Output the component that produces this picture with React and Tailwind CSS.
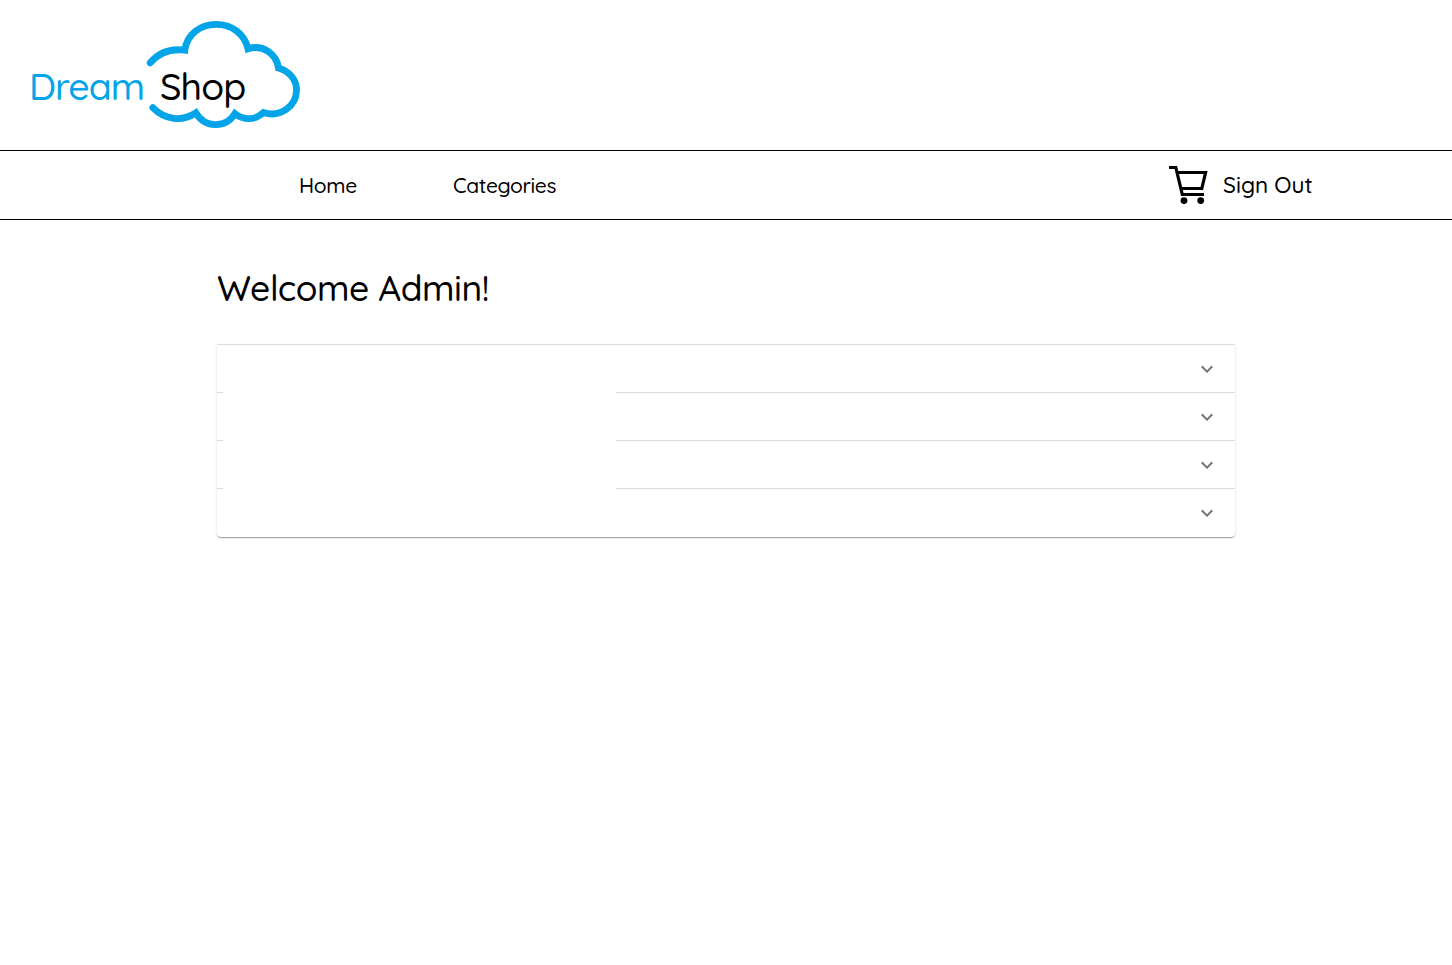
function CloudLogo() {
  return (
    <svg width="300" height="130" viewBox="0 0 300 130" fill="none" stroke="#03a4e8" strokeWidth="6.8" strokeLinecap="round" strokeLinejoin="miter" aria-hidden="true">
      <path d="M150.2 62.8 C159 52.5 171 48.3 184.8 50.2 C187 34.5 200 24.4 216 24.4 C232 24.4 244.5 34 248 48.8 C263 44 276.5 54 278.5 68 C289 71 296.5 79.5 296.5 90 C296.5 106 280.5 118 263.5 112.6 C255 120.5 243.5 120.5 235 113.6 C226 128.5 205 128.5 195.8 112.8 C182 122 165 120 152.8 107.6" />
    </svg>
  );
}

function CartIcon() {
  return (
    <svg width="40" height="40" viewBox="0 0 40 40" fill="none" stroke="#000" strokeWidth="3.2" aria-hidden="true">
      <path d="M1 2.5H7.8L14.3 29.5H36" />
      <path d="M9 7.5H37.6L33.8 23.5H13" />
      <circle cx="16" cy="35.6" r="3.4" fill="#000" stroke="none" />
      <circle cx="32.7" cy="35.6" r="3.4" fill="#000" stroke="none" />
    </svg>
  );
}

function Panel({ masked, last }) {
  return (
    <div className="flex h-12 items-stretch">
      <div className={last ? "w-1.5" : "w-1.5 border-b border-[#dcdcdc]"} />
      <div className={last || masked ? "w-[393px]" : "w-[393px] border-b border-[#dcdcdc]"} />
      <div className={last ? "flex flex-1 items-center justify-end pr-4" : "flex flex-1 items-center justify-end border-b border-[#dcdcdc] pr-4"}>
        <svg width="24" height="24" viewBox="0 0 24 24" fill="#757575" aria-hidden="true">
          <path d="M16.59 8.59 12 13.17 7.41 8.59 6 10l6 6 6-6z" />
        </svg>
      </div>
    </div>
  );
}

export default function App() {
  return (
    <div className="min-h-[965px] bg-white font-['Quicksand','Lato',sans-serif] font-medium text-black">
      <header className="relative h-[150px]">
        <CloudLogo />
        <div className="absolute top-[62px] left-[29px] flex text-[37.5px] leading-[48px] tracking-[-1px] whitespace-nowrap">
          <span className="w-[131px] text-[#03a4e8]">Dream</span>
          <span className="tracking-[-0.9px]">Shop</span>
        </div>
      </header>
      <nav className="flex h-[70px] items-center justify-between border-y border-black pr-[139px] pl-[299px] text-[21px] tracking-[-0.35px]">
        <div className="flex pt-px">
          <a className="w-[154px]">Home</a>
          <a>Categories</a>
        </div>
        <div className="flex items-center">
          <CartIcon />
          <a className="ml-[15px] w-[90px] text-[22.5px] tracking-normal whitespace-nowrap">Sign Out</a>
        </div>
      </nav>
      <main className="px-[217px] pt-[44px]">
        <h1 className="h-[48px] text-[35.5px] leading-[48px] tracking-[-0.45px] whitespace-nowrap">Welcome Admin!</h1>
        <section className="mt-[32px] h-[193px] rounded-b border-t border-[#dcdcdc] shadow-[0_2px_1px_-1px_rgba(0,0,0,0.2),0_1px_1px_0_rgba(0,0,0,0.14),0_1px_3px_0_rgba(0,0,0,0.12)]">
          <Panel masked />
          <Panel masked />
          <Panel masked />
          <Panel last />
        </section>
      </main>
    </div>
  );
}
